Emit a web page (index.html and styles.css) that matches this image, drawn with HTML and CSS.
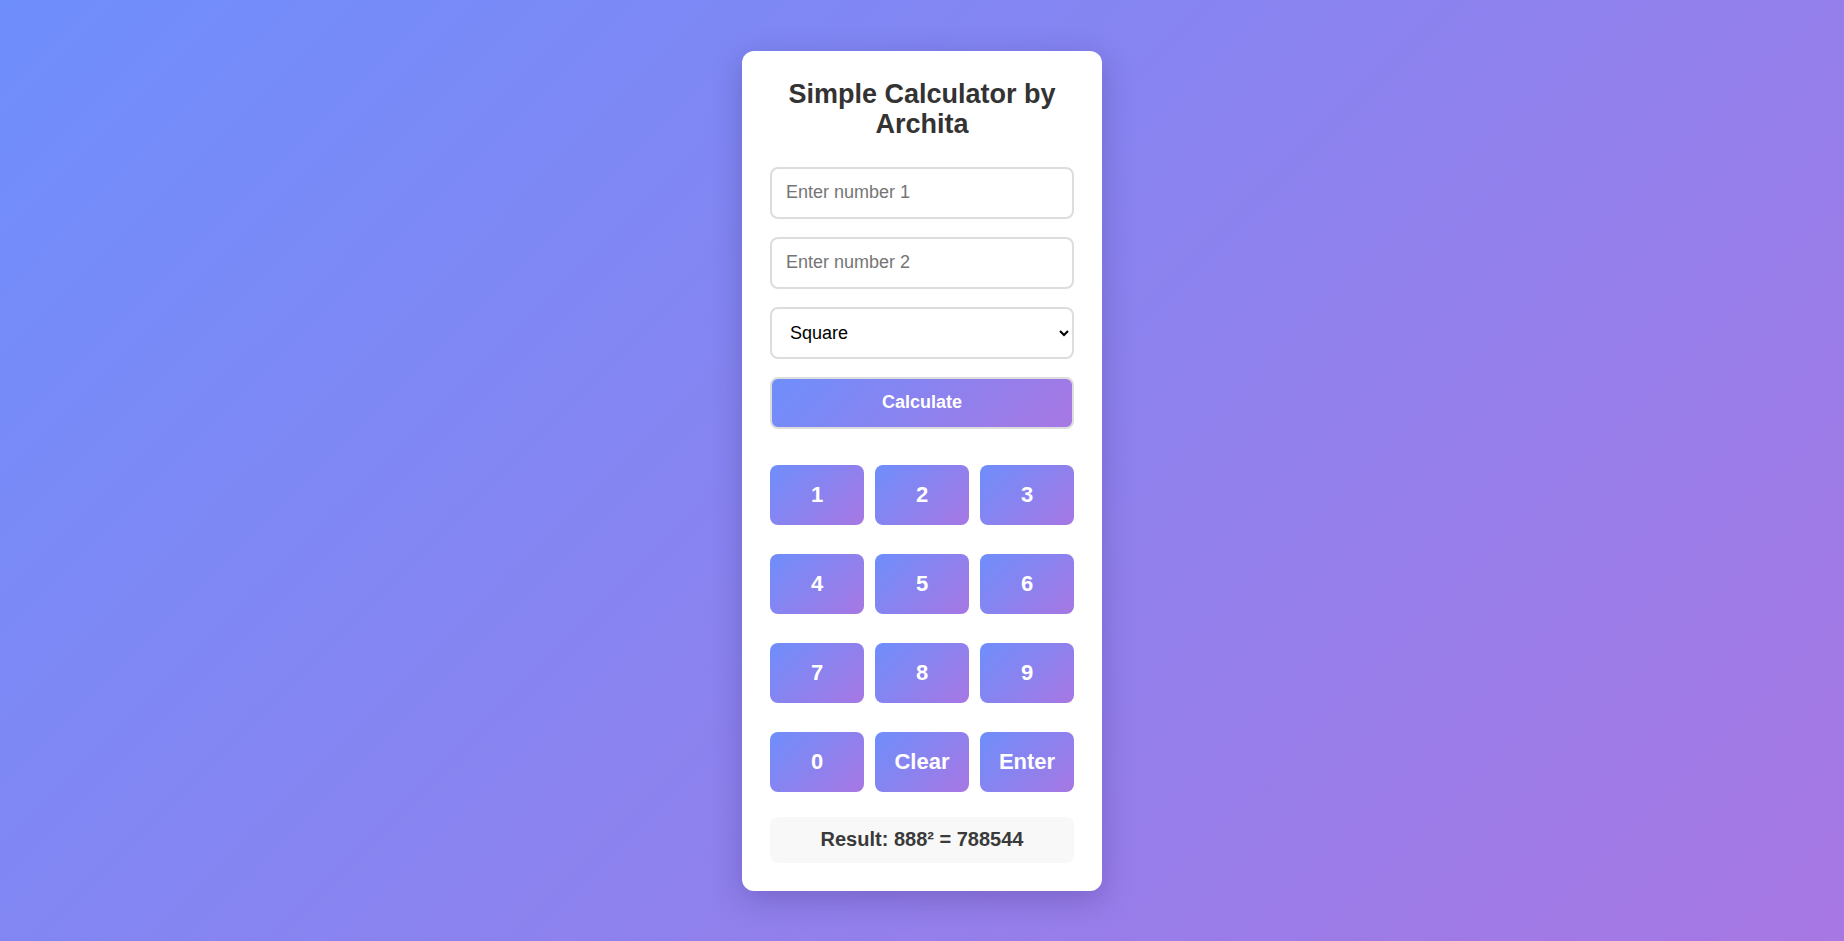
FILE: index.html
```html
<!DOCTYPE html>
<html lang="en">
<head>
<meta charset="utf-8">
<title>Simple Calculator</title>
<link rel="stylesheet" href="styles.css">
</head>
<body>
  <div class="card">
    <h1 class="title">Simple Calculator by Archita</h1>
    <div class="form">
      <input class="field" type="text" placeholder="Enter number 1">
      <input class="field" type="text" placeholder="Enter number 2">
      <select class="field select">
        <option>Square</option>
        <option>Add</option>
        <option>Subtract</option>
      </select>
      <button class="calc">Calculate</button>
    </div>
    <div class="keypad">
      <button class="key">1</button>
      <button class="key">2</button>
      <button class="key">3</button>
      <button class="key">4</button>
      <button class="key">5</button>
      <button class="key">6</button>
      <button class="key">7</button>
      <button class="key">8</button>
      <button class="key">9</button>
      <button class="key">0</button>
      <button class="key">Clear</button>
      <button class="key">Enter</button>
    </div>
    <div class="result">Result: 888² = 788544</div>
  </div>
</body>
</html>
```

FILE: styles.css
```css
* {
  box-sizing: border-box;
}

html, body {
  margin: 0;
  padding: 0;
}

body {
  min-height: 100vh;
  display: flex;
  align-items: center;
  justify-content: center;
  font-family: "Liberation Sans", Arial, sans-serif;
  background: linear-gradient(135deg, #6e8efb, #a777e3);
}

.card {
  width: 360px;
  padding: 28px;
  background: #fff;
  border-radius: 12px;
  box-shadow: 0 8px 30px rgba(40, 20, 90, 0.25);
  display: flex;
  flex-direction: column;
}

.title {
  margin: 0 0 28px;
  font-size: 27px;
  line-height: 30px;
  font-weight: bold;
  color: #333;
  text-align: center;
}

.form {
  display: flex;
  flex-direction: column;
  gap: 18px;
}

.field {
  width: 100%;
  height: 52px;
  padding: 0 14px;
  border: 2px solid #ddd;
  border-radius: 8px;
  font-family: "Liberation Sans", Arial, sans-serif;
  font-size: 18px;
  color: #000;
  background: #fff;
  outline: none;
}

.field::placeholder {
  color: #757575;
}

.select {
  padding: 0 12px 0 14px;
}

.calc {
  height: 52px;
  border: 2px solid #ddd;
  border-radius: 8px;
  background: linear-gradient(135deg, #6e8efb, #a777e3);
  color: #fff;
  font-family: "Liberation Sans", Arial, sans-serif;
  font-size: 18px;
  font-weight: bold;
  cursor: pointer;
}

.keypad {
  margin-top: 36px;
  display: grid;
  grid-template-columns: repeat(3, 1fr);
  column-gap: 11px;
  row-gap: 29px;
}

.key {
  height: 60px;
  border: none;
  border-radius: 8px;
  background: linear-gradient(135deg, #6e8efb, #a777e3);
  color: #fff;
  font-family: "Liberation Sans", Arial, sans-serif;
  font-size: 22px;
  font-weight: bold;
  cursor: pointer;
}

.result {
  margin-top: 25px;
  height: 46px;
  display: flex;
  align-items: center;
  justify-content: center;
  background: #f8f8f8;
  border-radius: 8px;
  font-size: 20px;
  font-weight: bold;
  color: #3a3a3a;
}
```
